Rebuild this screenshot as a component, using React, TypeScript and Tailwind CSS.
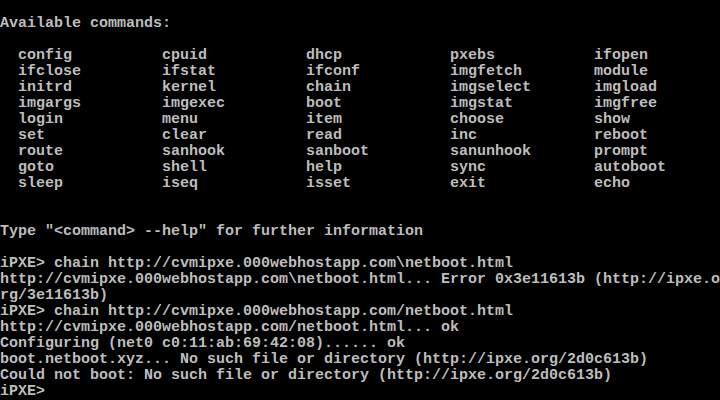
const commands = [
  "config", "cpuid", "dhcp", "pxebs", "ifopen",
  "ifclose", "ifstat", "ifconf", "imgfetch", "module",
  "initrd", "kernel", "chain", "imgselect", "imgload",
  "imgargs", "imgexec", "boot", "imgstat", "imgfree",
  "login", "menu", "item", "choose", "show",
  "set", "clear", "read", "inc", "reboot",
  "route", "sanhook", "sanboot", "sanunhook", "prompt",
  "goto", "shell", "help", "sync", "autoboot",
  "sleep", "iseq", "isset", "exit", "echo",
];

const output = [
  "",
  "",
  "Type \"<command> --help\" for further information",
  "",
  "iPXE> chain http://cvmipxe.000webhostapp.com\\netboot.html",
  "http://cvmipxe.000webhostapp.com\\netboot.html... Error 0x3e11613b (http://ipxe.o",
  "rg/3e11613b)",
  "iPXE> chain http://cvmipxe.000webhostapp.com/netboot.html",
  "http://cvmipxe.000webhostapp.com/netboot.html... ok",
  "Configuring (net0 c0:11:ab:69:42:08)...... ok",
  "boot.netboot.xyz... No such file or directory (http://ipxe.org/2d0c613b)",
  "Could not boot: No such file or directory (http://ipxe.org/2d0c613b)",
  "iPXE>",
];

export default function App() {
  return (
    <div className="w-[720px] h-[400px] bg-black overflow-hidden text-[#bdbdbd] font-['Liberation_Mono',monospace] text-[15px] leading-4 font-bold">
      <div className="h-4" />
      <div className="h-4 whitespace-pre">Available commands:</div>
      <div className="h-4" />

      {/* 16-column cells, starting at column 2 */}
      <div className="grid grid-cols-[repeat(5,144px)] pl-[18px]">
        {commands.map((c) => (
          <div key={c} className="h-4 whitespace-pre">{c}</div>
        ))}
      </div>

      {output.map((line, i) => (
        <div key={i} className="h-4 whitespace-pre">{line}</div>
      ))}
    </div>
  );
}
